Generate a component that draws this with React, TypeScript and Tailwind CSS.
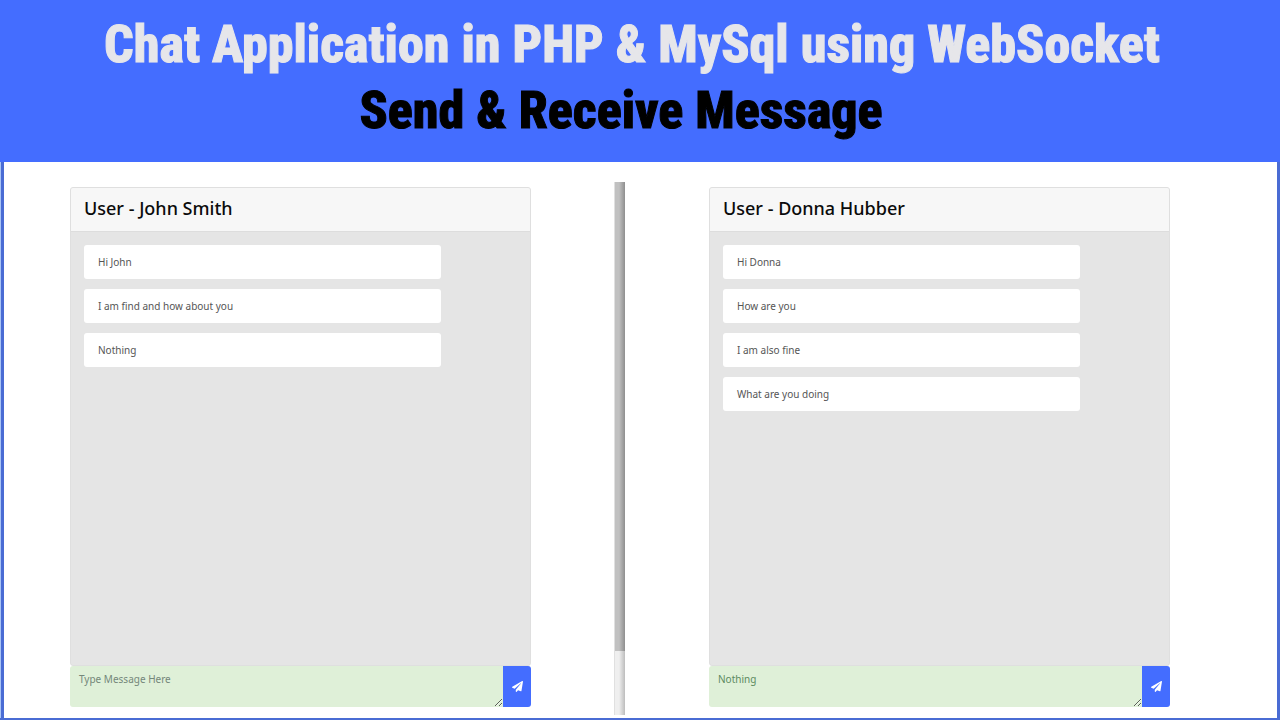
import { FaPaperPlane } from "react-icons/fa";

type ChatPanelProps = {
  id: string;
  user: string;
  messages: string[];
  draft?: string;
};

function ChatPanel({ id, user, messages, draft }: ChatPanelProps) {
  return (
    <section className="flex flex-1 flex-col" aria-labelledby={`${id}-title`}>
      <div className="flex flex-1 flex-col overflow-hidden rounded-[3px] border border-[#dfdfdf] bg-[#e5e5e5]">
        <header className="h-11 border-b border-[#dddddd] bg-[#f7f7f7] px-[13px] py-2">
          <h2 id={`${id}-title`} className="text-[18px] leading-6 font-medium text-[#0b0b0b]">
            User - {user}
          </h2>
        </header>
        <ul className="flex flex-col gap-[10px] py-[13px] pr-[89px] pl-[13px]">
          {messages.map((message) => (
            <li
              key={message}
              className="flex h-[34px] items-center rounded-[3px] bg-white px-[14px] text-[10px] leading-4 text-[#555555]"
            >
              {message}
            </li>
          ))}
        </ul>
      </div>
      <form className="flex h-[41px]" onSubmit={(event) => event.preventDefault()}>
        <textarea
          aria-label="Message"
          placeholder="Type Message Here"
          defaultValue={draft}
          className="min-w-0 flex-1 rounded-l-[3px] bg-[#dff0d8] px-[9px] py-[5px] text-[10px] leading-4 text-[#5c8a60] outline-none placeholder:text-[#74877a]"
        />
        <button
          type="submit"
          aria-label="Send"
          className="flex w-7 items-center justify-center rounded-r-[3px] bg-[#446dff] text-white"
        >
          <FaPaperPlane className="size-[11px]" />
        </button>
      </form>
    </section>
  );
}

export default function App() {
  return (
    <div className="flex min-h-screen flex-col border-b-2 border-[#4a6cd4] bg-white font-['Noto_Sans',sans-serif]">
      <header className="bg-[#446dff] pt-3 pb-[18px] pr-4 text-center font-['Roboto_Condensed','Noto_Sans',sans-serif] text-[52px] leading-[66px] font-extrabold [-webkit-text-stroke:1px_currentColor]">
        <h1 className="text-[#e6e6ea]">Chat Application in PHP &amp; MySql using WebSocket</h1>
        <p className="pr-[22px] text-black">Send &amp; Receive Message</p>
      </header>
      <div className="flex flex-1 border-l border-[#a9c4f5]">
        <main className="grid flex-1 grid-cols-[610fr_11px_652fr] border-x-[3px] border-[#4a6cd4]">
          <div className="flex pt-[25px] pr-[83px] pb-[11px] pl-[66px]">
            <ChatPanel
              id="john"
              user="John Smith"
              messages={["Hi John", "I am find and how about you", "Nothing"]}
            />
          </div>
          <div className="flex flex-col pt-5 pb-[3px]">
            <div className="flex flex-1 flex-col border-l border-[#e0e0e0] bg-linear-to-r from-[#efefef] from-40% to-[#bdbdbd]">
              <div className="h-[88%] bg-linear-to-r from-[#c1c1c1] from-40% to-[#8f8f8f]" />
            </div>
          </div>
          <div className="flex pt-[25px] pr-[107px] pb-[11px] pl-[84px]">
            <ChatPanel
              id="donna"
              user="Donna Hubber"
              messages={["Hi Donna", "How are you", "I am also fine", "What are you doing"]}
              draft="Nothing"
            />
          </div>
        </main>
      </div>
    </div>
  );
}
